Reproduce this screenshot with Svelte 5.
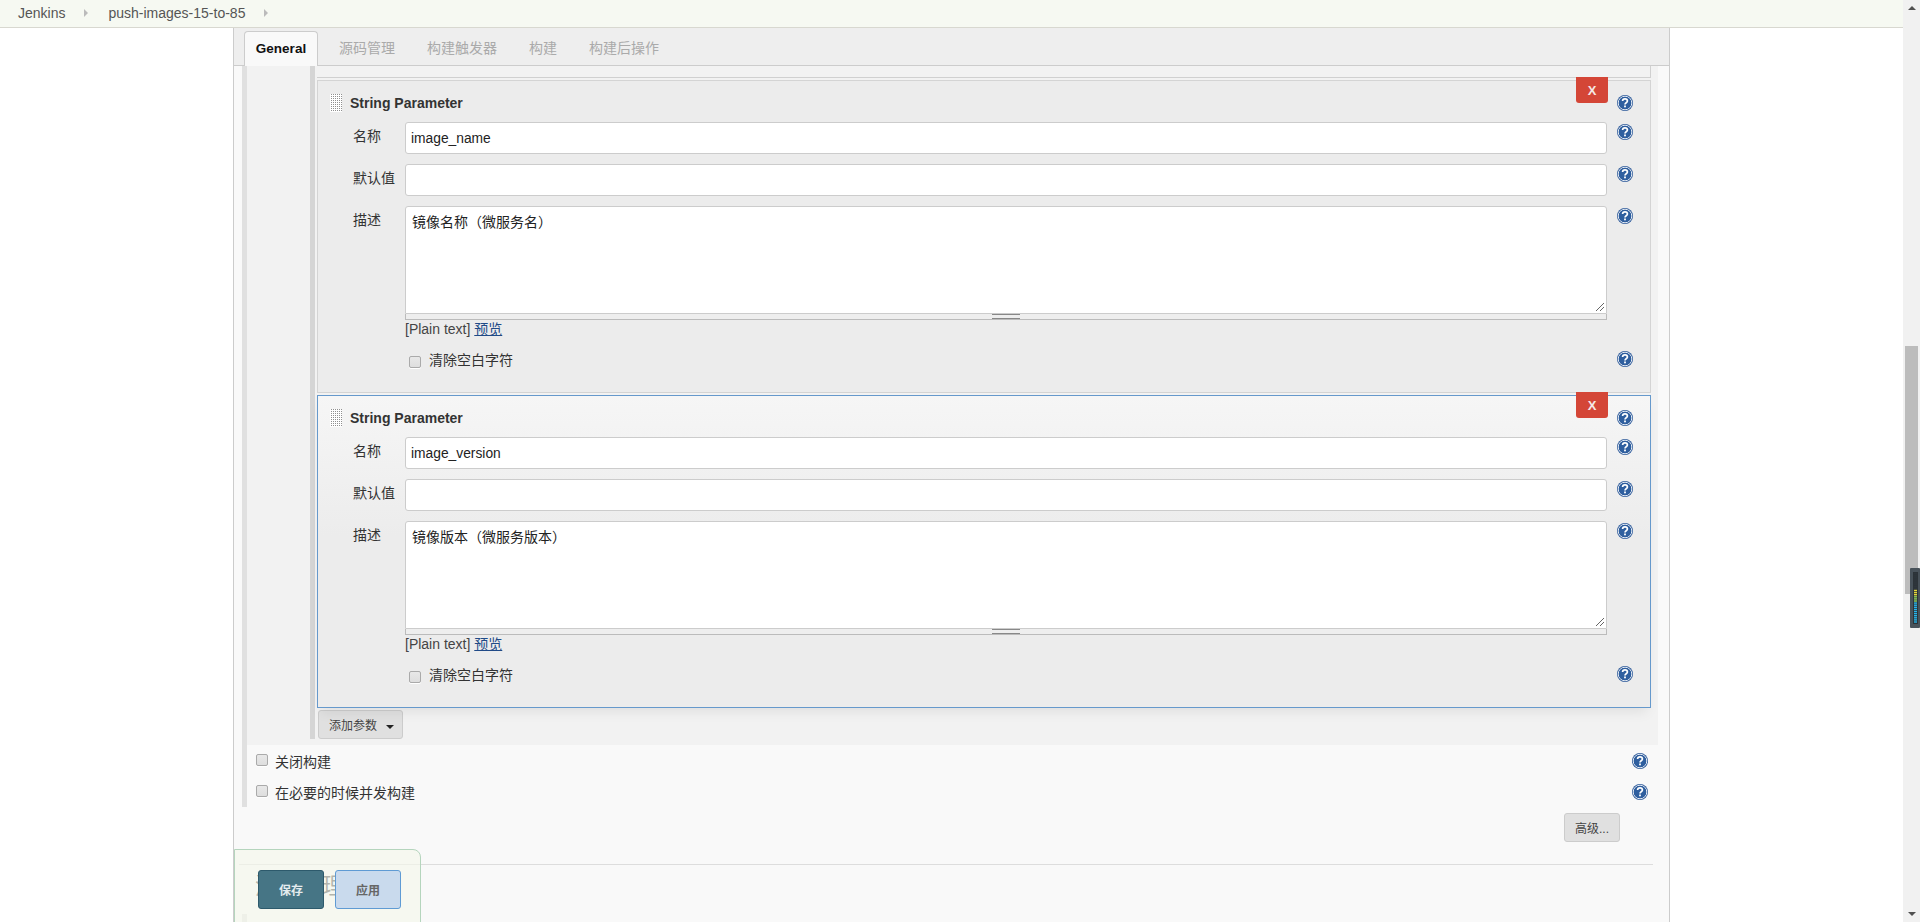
<script>
  const tabs = ['源码管理', '构建触发器', '构建', '构建后操作'];

  const params = [
    { name: 'image_name', desc: '镜像名称（微服务名）', active: false },
    { name: 'image_version', desc: '镜像版本（微服务版本）', active: true }
  ];

  // meter segments in the scrollbar widget, top to bottom
  const leds = Array.from({ length: 24 }, (_, i) => {
    if (i < 8) return '#2e363c';
    if (i < 11) return '#e3d83a';
    if (i < 14) return '#8fd05a';
    return '#27b4ea';
  });
</script>

{#snippet help()}
  <svg class="help" viewBox="0 0 16 16" width="16" height="16" aria-hidden="true">
    <circle cx="8" cy="8" r="8" fill="#2a5798" />
    <circle cx="8" cy="8" r="6.8" fill="none" stroke="#e6edf5" stroke-width="1" />
    <circle cx="8" cy="8" r="6" fill="#2f5f9f" />
    <path d="M5.6 6.1c0-1.5 1.1-2.2 2.4-2.2s2.4.8 2.4 2.1c0 1.8-2.4 1.7-2.4 3.5" fill="none" stroke="#fff" stroke-width="1.7" />
    <rect x="7.1" y="10.5" width="1.8" height="1.8" fill="#fff" />
  </svg>
{/snippet}

<div class="page">
  <div class="viewport">
    <nav class="crumbs">
      <span>Jenkins</span>
      <i class="arrow"></i>
      <span>push-images-15-to-85</span>
      <i class="arrow"></i>
    </nav>

    <main class="main">
      <div class="tabbar">
        <div class="tab current">General</div>
        {#each tabs as t}
          <div class="tab">{t}</div>
        {/each}
      </div>

      <div class="rail">
        <div class="params">
          <div class="params-inner">
            <div class="stub"></div>
            {#each params as p}
              <section class="block" class:active={p.active}>
                <button class="del" type="button">X</button>
                <div class="row title-row">
                  <div class="title"><span class="handle"></span>String Parameter</div>
                  {@render help()}
                </div>
                <div class="row">
                  <div class="label">名称</div>
                  <div class="input">{p.name}</div>
                  {@render help()}
                </div>
                <div class="row">
                  <div class="label">默认值</div>
                  <div class="input"></div>
                  {@render help()}
                </div>
                <div class="row ta-row">
                  <div class="label">描述</div>
                  <div class="ta-wrap">
                    <div class="textarea">
                      {p.desc}
                      <svg class="resize" viewBox="0 0 10 10" width="10" height="10" aria-hidden="true">
                        <path d="M1 9 9 1M5 9 9 5" stroke="#666" stroke-width="1" fill="none" />
                      </svg>
                    </div>
                    <div class="grip"><span></span></div>
                    <div class="plain">[Plain text] <a href="#preview">预览</a></div>
                  </div>
                  {@render help()}
                </div>
                <div class="row check-row">
                  <div class="check-field">
                    <span class="box"></span>
                    <span>清除空白字符</span>
                  </div>
                  {@render help()}
                </div>
              </section>
            {/each}
            <button class="add" type="button">添加参数 <i class="caret"></i></button>
          </div>
        </div>

        <div class="opt">
          <span class="box"></span><span class="opt-label">关闭构建</span>
          {@render help()}
        </div>
        <div class="opt">
          <span class="box"></span><span class="opt-label">在必要的时候并发构建</span>
          {@render help()}
        </div>
      </div>

      <div class="adv-row"><button class="adv" type="button">高级...</button></div>
      <div class="hr"></div>
      <h2 class="section-title">源码管理</h2>
      <div class="rail next"></div>
    </main>
  </div>

  <aside class="scrollbar">
    <i class="sb-up"></i>
    <div class="sb-track"><div class="sb-thumb"></div></div>
    <i class="sb-down"></i>
  </aside>

  <svg class="meter" viewBox="0 0 10 60" width="10" height="60" aria-hidden="true">
    <rect x="0" y="0" width="10" height="60" rx="1" fill="#48525a" />
    <rect x="3" y="4" width="5" height="52" fill="#2c3338" />
    {#each leds as c, i}
      <rect x="4" y={5 + i * 2.1} width="3" height="1.4" fill={c} />
    {/each}
  </svg>

  <div class="bottom-bar">
    <button class="save" type="button">保存</button>
    <button class="apply" type="button">应用</button>
  </div>
</div>

<style>
  :global(body) {
    margin: 0;
    background: #fff;
  }

  .page {
    position: relative;
    display: flex;
    height: 922px;
    overflow: hidden;
    font-family: "Liberation Sans", "Noto Sans CJK SC", sans-serif;
    font-size: 14px;
    color: #333;
  }

  .viewport {
    flex: 1;
    min-width: 0;
    display: flex;
    flex-direction: column;
  }

  .crumbs {
    flex: none;
    box-sizing: border-box;
    height: 28px;
    display: flex;
    align-items: center;
    padding: 0 0 1px 18px;
    background: #f6f9f2;
    border-bottom: 1px solid #d8d8d0;
    color: #555;
  }

  .arrow {
    width: 0;
    height: 0;
    margin: 0 20px 0 19px;
    border-left: 4px solid #bbb;
    border-top: 4px solid transparent;
    border-bottom: 4px solid transparent;
  }

  .main {
    box-sizing: border-box;
    flex: 1;
    width: 1437px;
    margin-left: 233px;
    background: #f9f9f9;
    border-left: 1px solid #ccc;
    border-right: 1px solid #ccc;
  }

  .tabbar {
    box-sizing: border-box;
    height: 38px;
    padding: 3px 0 0 10px;
    display: flex;
    background: #eee;
    border-bottom: 1px solid #ccc;
  }

  .tab {
    height: 35px;
    line-height: 35px;
    padding-right: 32px;
    padding-left: 0;
    color: #aaa;
    box-sizing: border-box;
  }

  .tab:nth-child(2) {
    margin-left: 21px;
  }

  .tab.current {
    width: 74px;
    padding: 0;
    text-align: center;
    font-size: 13.5px;
    font-weight: bold;
    color: #111;
    background: #f9f9f9;
    border: 1px solid #ccc;
    border-bottom: none;
    border-radius: 4px 4px 0 0;
    height: 35px;
    line-height: 33px;
  }

  .rail {
    margin: 0 11px 0 8px;
    border-left: 5px solid #e0e0e0;
  }

  .params {
    padding: 0 0 6px 63px;
    background: #f2f2f2;
  }

  .params-inner {
    padding: 0 7px 0 2px;
    border-left: 5px solid #d5d5d5;
  }

  .stub {
    height: 11px;
    border-right: 1px solid #d0d0d0;
    border-bottom: 1px solid #d0d0d0;
    margin-bottom: 2px;
  }

  .block {
    position: relative;
    box-sizing: border-box;
    height: 313px;
    padding: 13px 0 0;
    margin-bottom: 2px;
    border: 1px solid #d4d4d4;
    background: #ececec;
  }

  .block.active {
    border-color: #6699cc;
    background: linear-gradient(#f6f6f6, #ececec 45%);
    box-shadow: 0 8px 12px -4px rgba(0, 0, 0, 0.08);
  }

  .del {
    position: absolute;
    top: -4px;
    right: 42px;
    width: 32px;
    height: 26px;
    padding: 0;
    border: none;
    border-radius: 0 0 3px 3px;
    background: #d44637;
    color: #f5e8e6;
    font: bold 13px "Liberation Sans", sans-serif;
  }

  .row {
    display: grid;
    grid-template-columns: 87px 1202px 26px;
    margin-bottom: 10px;
  }

  .row .help {
    grid-column: 3;
    margin: 2px 0 0 10px;
  }

  .title-row {
    height: 18px;
  }

  .title-row .help {
    margin-top: 1px;
  }

  .title {
    grid-column: 1 / 3;
    display: flex;
    align-items: center;
    gap: 8px;
    padding-left: 12px;
    font-weight: bold;
    color: #333;
    line-height: 18px;
  }

  .handle {
    width: 12px;
    height: 18px;
    background: conic-gradient(#909090 25%, #fff 0) 0 0 / 2px 2px;
  }

  .label {
    padding: 4px 0 0 35px;
    line-height: 20px;
    color: #333;
  }

  .input {
    box-sizing: border-box;
    height: 32px;
    line-height: 32px;
    padding: 0 5px;
    background: #fff;
    border: 1px solid #ccc;
    border-radius: 3px;
    font-size: 13.8px;
    color: #222;
  }

  .ta-row {
    margin-bottom: 0;
  }

  .textarea {
    position: relative;
    box-sizing: border-box;
    height: 108px;
    padding: 6px 6px;
    background: #fff;
    border: 1px solid #ccc;
    border-radius: 3px 3px 0 0;
    font-size: 14px;
    line-height: 18px;
    color: #222;
  }

  .resize {
    position: absolute;
    right: 1px;
    bottom: 1px;
  }

  .grip {
    box-sizing: border-box;
    height: 6px;
    display: flex;
    justify-content: center;
    background: #eee;
    border: 1px solid #bbb;
    border-top: none;
  }

  .grip span {
    width: 28px;
    height: 3px;
    border-top: 1px solid #888;
    border-bottom: 1px solid #888;
  }

  .plain {
    height: 18px;
    line-height: 18px;
    color: #444;
  }

  .plain a {
    color: #204a87;
    text-decoration: underline;
  }

  .check-row {
    margin: 0;
    padding-top: 11px;
  }

  .check-field {
    grid-column: 2;
    display: flex;
    align-items: center;
    gap: 8px;
    padding-left: 4px;
    height: 20px;
  }

  .check-field .box {
    margin-top: 5px;
  }

  .box {
    flex: none;
    box-sizing: border-box;
    width: 12px;
    height: 12px;
    background: linear-gradient(#e8e8e8, #dedede);
    border: 1px solid #aaa;
    border-radius: 2px;
    box-shadow: 0 1px 0 #fff;
  }

  .add {
    display: block;
    box-sizing: border-box;
    width: 85px;
    height: 29px;
    margin: 0 0 0 1px;
    padding: 0 0 0 10px;
    text-align: left;
    background: #e0e0e0;
    border: 1px solid #ccc;
    border-radius: 3px;
    font: 12px "Liberation Sans", "Noto Sans CJK SC", sans-serif;
    color: #444;
  }

  .caret {
    display: inline-block;
    width: 0;
    height: 0;
    margin-left: 6px;
    vertical-align: 1px;
    border-top: 4px solid #222;
    border-left: 4px solid transparent;
    border-right: 4px solid transparent;
  }

  .opt {
    box-sizing: border-box;
    height: 31px;
    display: flex;
    align-items: center;
    padding: 0 10px 0 9px;
  }

  .opt .box {
    margin-top: -2px;
  }

  .opt-label {
    flex: 1;
    margin-left: 7px;
  }

  .adv-row {
    display: flex;
    justify-content: flex-end;
    padding: 6px 49px 0 0;
  }

  .adv {
    box-sizing: border-box;
    width: 56px;
    height: 29px;
    padding: 0;
    background: #e0e0e0;
    border: 1px solid #ccc;
    border-radius: 3px;
    font: 12px "Liberation Sans", "Noto Sans CJK SC", sans-serif;
    color: #444;
  }

  .hr {
    height: 1px;
    margin: 22px 16px 0 5px;
    background: #ddd;
  }

  .section-title {
    margin: 7px 0 0 21px;
    font-size: 22.4px;
    line-height: 30px;
    font-weight: normal;
    color: #333;
  }

  .rail.next {
    height: 40px;
    margin-top: 12px;
  }

  .scrollbar {
    flex: none;
    width: 17px;
    display: flex;
    flex-direction: column;
    align-items: center;
    background: #f1f1f1;
  }

  .sb-track {
    flex: 1;
    width: 100%;
    padding-top: 336px;
    box-sizing: border-box;
  }

  .sb-thumb {
    width: 13px;
    height: 248px;
    margin-left: 2px;
    background: #bcbcbc;
  }

  .sb-up,
  .sb-down {
    flex: none;
    width: 0;
    height: 0;
    border-left: 4px solid transparent;
    border-right: 4px solid transparent;
  }

  .sb-up {
    margin-top: 6px;
    border-bottom: 4px solid #505050;
  }

  .sb-down {
    margin-bottom: 6px;
    border-top: 4px solid #505050;
  }

  .meter {
    position: absolute;
    top: 568px;
    left: 1910px;
  }

  .bottom-bar {
    position: absolute;
    left: 234px;
    top: 849px;
    box-sizing: border-box;
    width: 187px;
    height: 80px;
    display: flex;
    gap: 11px;
    padding: 20px 0 0 23px;
    background: rgba(245, 248, 236, 0.66);
    border: 1px solid #b5d5bd;
    border-radius: 0 8px 0 0;
  }

  .save,
  .apply {
    box-sizing: border-box;
    width: 66px;
    height: 39px;
    padding: 0;
    border-radius: 3px;
    font: bold 12px "Liberation Sans", "Noto Sans CJK SC", sans-serif;
  }

  .save {
    background: #467585;
    border: 1px solid #2d5a6c;
    color: #e3ebee;
  }

  .apply {
    background: #c9daed;
    border: 1px solid #5f9bd4;
    color: #666;
  }
</style>
